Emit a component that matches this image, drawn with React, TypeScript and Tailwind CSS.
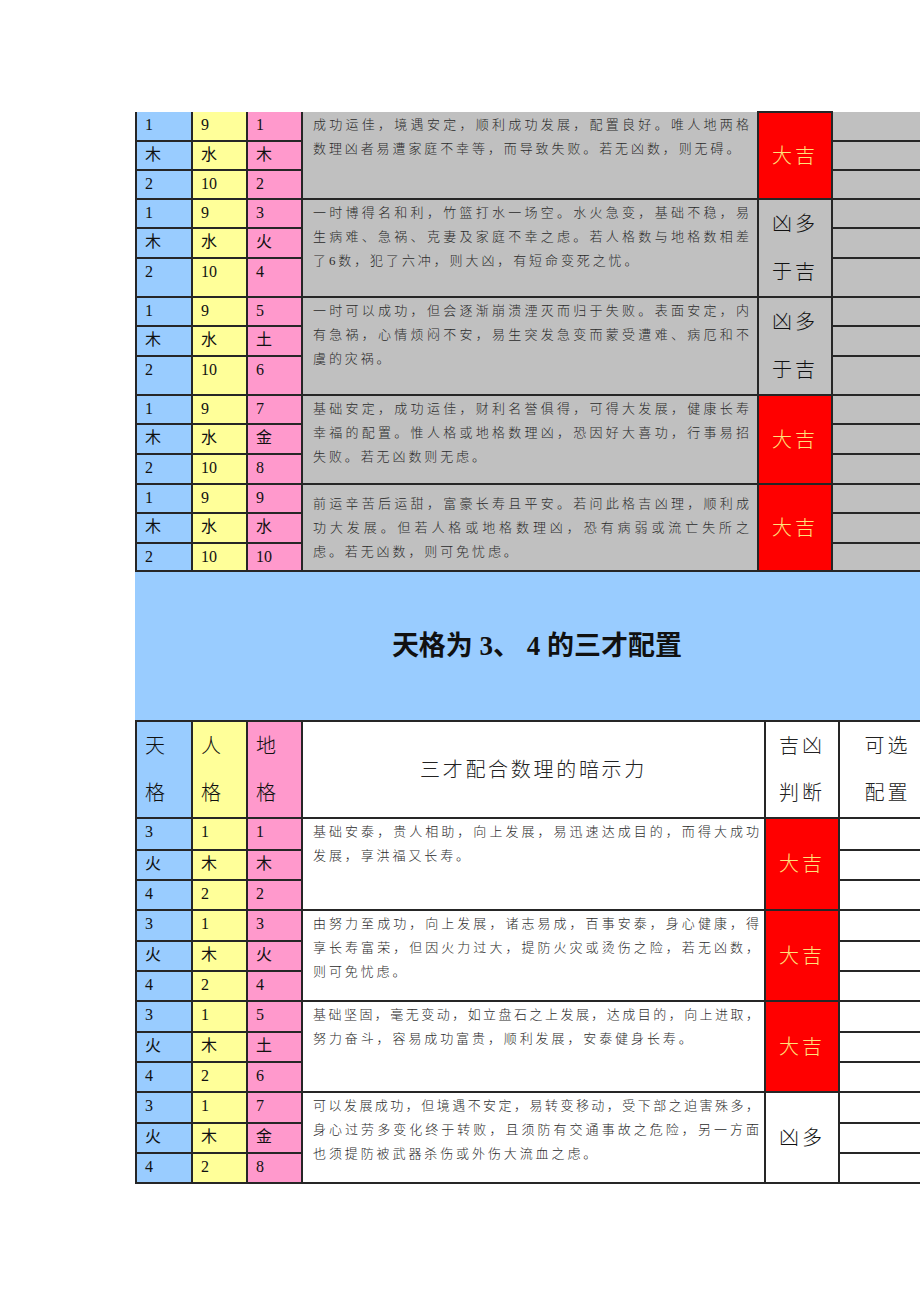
import React from 'react';

type Group = {
  tian: string[];
  ren: string[];
  di: string[];
  lines: string[];
  judge: 'good' | 'bad' | 'bad1';
  heights: number[];
  pt?: number;
};

const top: Group[] = [
  {
    tian: ['1', '木', '2'], ren: ['9', '水', '10'], di: ['1', '木', '2'],
    lines: ['成功运佳，境遇安定，顺利成功发展，配置良好。唯人地两格', '数理凶者易遭家庭不幸等，而导致失败。若无凶数，则无碍。'],
    judge: 'good', heights: [29, 29, 29],
  },
  {
    tian: ['1', '木', '2'], ren: ['9', '水', '10'], di: ['3', '火', '4'],
    lines: ['一时博得名和利，竹篮打水一场空。水火急变，基础不稳，易', '生病难、急祸、克妻及家庭不幸之虑。若人格数与地格数相差', '了6数，犯了六冲，则大凶，有短命变死之忧。'],
    judge: 'bad', heights: [29, 30, 39],
  },
  {
    tian: ['1', '木', '2'], ren: ['9', '水', '10'], di: ['5', '土', '6'],
    lines: ['一时可以成功，但会逐渐崩溃湮灭而归于失败。表面安定，内', '有急祸，心情烦闷不安，易生突发急变而蒙受遭难、病厄和不', '虞的灾祸。'],
    judge: 'bad', heights: [29, 30, 39],
  },
  {
    tian: ['1', '木', '2'], ren: ['9', '水', '10'], di: ['7', '金', '8'],
    lines: ['基础安定，成功运佳，财利名誉俱得，可得大发展，健康长寿', '幸福的配置。惟人格或地格数理凶，恐因好大喜功，行事易招', '失败。若无凶数则无虑。'],
    judge: 'good', heights: [29, 30, 30],
  },
  {
    tian: ['1', '木', '2'], ren: ['9', '水', '10'], di: ['9', '水', '10'],
    lines: ['前运辛苦后运甜，富豪长寿且平安。若问此格吉凶理，顺利成', '功大发展。但若人格或地格数理凶，恐有病弱或流亡失所之', '虑。若无凶数，则可免忧虑。'],
    judge: 'good', heights: [29, 30, 28], pt: 7,
  },
];

const bottom: Group[] = [
  {
    tian: ['3', '火', '4'], ren: ['1', '木', '2'], di: ['1', '木', '2'],
    lines: ['基础安泰，贵人相助，向上发展，易迅速达成目的，而得大成功', '发展，享洪福又长寿。'],
    judge: 'good', heights: [32, 30, 30],
  },
  {
    tian: ['3', '火', '4'], ren: ['1', '木', '2'], di: ['3', '火', '4'],
    lines: ['由努力至成功，向上发展，诸志易成，百事安泰，身心健康，得', '享长寿富荣，但因火力过大，提防火灾或烫伤之险，若无凶数，', '则可免忧虑。'],
    judge: 'good', heights: [31, 30, 30],
  },
  {
    tian: ['3', '火', '4'], ren: ['1', '木', '2'], di: ['5', '土', '6'],
    lines: ['基础坚固，毫无变动，如立盘石之上发展，达成目的，向上进取，', '努力奋斗，容易成功富贵，顺利发展，安泰健身长寿。'],
    judge: 'good', heights: [31, 30, 30],
  },
  {
    tian: ['3', '火', '4'], ren: ['1', '木', '2'], di: ['7', '金', '8'],
    lines: ['可以发展成功，但境遇不安定，易转变移动，受下部之迫害殊多，', '身心过劳多变化终于转败，且须防有交通事故之危险，另一方面', '也须提防被武器杀伤或外伤大流血之虑。'],
    judge: 'bad1', heights: [31, 30, 30],
  },
];

const cell = 'border-2 border-[#262626] p-0 align-top';
const small = 'pl-2 pt-[1px] text-[16px] leading-[24px] text-[#111]';

function Judge({ kind, bg }: { kind: Group['judge']; bg: string }) {
  if (kind === 'good') {
    return (
      <td rowSpan={3} className={`${cell} !align-middle bg-[#ff0000] text-center text-[20px] leading-[28px] tracking-[3px] text-[#ffe27a] font-light`}>
        大吉
      </td>
    );
  }
  return (
    <td rowSpan={3} className={`${cell} !align-middle ${bg} text-center text-[20px] leading-[48px] tracking-[3px] text-[#111] font-light`}>
      {kind === 'bad' ? (
        <>
          凶多
          <br />
          于吉
        </>
      ) : (
        '凶多'
      )}
    </td>
  );
}

function Rows({ g, bg, textW, first }: { g: Group; bg: string; textW: number; first?: boolean }) {
  return (
    <>
      {[0, 1, 2].map(i => {
        const noTop = first && i === 0 ? ' border-t-0' : '';
        return (
          <tr key={i} style={{ height: g.heights[i] }}>
            <td className={`${cell}${noTop} ${small} bg-[#99ccff]`}>{g.tian[i]}</td>
            <td className={`${cell}${noTop} ${small} bg-[#ffff99]`}>{g.ren[i]}</td>
            <td className={`${cell}${noTop} ${small} bg-[#ff99cc]`}>{g.di[i]}</td>
            {i === 0 && (
              <>
                <td rowSpan={3} className={`${cell}${noTop} ${bg} pl-[10px] text-[#2b2b2b] font-light`}>
                  <div className="text-[13px] leading-[24px] whitespace-nowrap" style={{ width: textW, paddingTop: g.pt ?? 1 }}>
                    {g.lines.map((l, k) => (
                      <div
                        key={k}
                        className={k < g.lines.length - 1 ? '[text-align-last:justify] text-justify' : 'tracking-[2.9px]'}
                      >
                        {l}
                      </div>
                    ))}
                  </div>
                </td>
                <Judge kind={g.judge} bg={bg} />
              </>
            )}
            <td className={`${cell}${noTop} ${bg}`} />
          </tr>
        );
      })}
    </>
  );
}

export default function App() {
  return (
    <div className="w-[920px] h-[1302px] overflow-hidden bg-white pt-[111px] pl-[135px] font-['Liberation_Serif','Noto_Sans_CJK_SC',serif]">
      <div className="w-[800px]">
        {/* upper table, continued from previous page */}
        <table className="w-[800px] table-fixed border-collapse">
          <colgroup>
            <col className="w-[56px]" />
            <col className="w-[55px]" />
            <col className="w-[55px]" />
            <col className="w-[456px]" />
            <col className="w-[74px]" />
            <col className="w-[104px]" />
          </colgroup>
          <tbody>
            {top.map((g, i) => (
              <Rows key={i} g={g} bg="bg-[#c0c0c0]" textW={436} first={i === 0} />
            ))}
          </tbody>
        </table>

        {/* section title */}
        <div className="h-[148px] bg-[#99ccff] flex items-center justify-center">
          <h2 className="text-[27px] font-bold text-[#111] pl-[4px]">天格为 3、 4 的三才配置</h2>
        </div>

        <table className="w-[800px] table-fixed border-collapse">
          <colgroup>
            <col className="w-[56px]" />
            <col className="w-[55px]" />
            <col className="w-[55px]" />
            <col className="w-[463px]" />
            <col className="w-[74px]" />
            <col className="w-[97px]" />
          </colgroup>
          <tbody>
            <tr style={{ height: 97 }}>
              <td className={`${cell} !align-middle bg-[#99ccff] pl-2 text-[20px] leading-[47px] font-light text-[#111]`}>天<br />格</td>
              <td className={`${cell} !align-middle bg-[#ffff99] pl-2 text-[20px] leading-[47px] font-light text-[#111]`}>人<br />格</td>
              <td className={`${cell} !align-middle bg-[#ff99cc] pl-2 text-[20px] leading-[47px] font-light text-[#111]`}>地<br />格</td>
              <td className={`${cell} !align-middle bg-white text-center text-[20px] tracking-[2.7px] font-light text-[#222]`}>三才配合数理的暗示力</td>
              <td className={`${cell} !align-middle bg-white text-center text-[20px] leading-[47px] tracking-[3px] font-light text-[#222]`}>吉凶<br />判断</td>
              <td className={`${cell} !align-middle bg-white text-center text-[20px] leading-[47px] tracking-[3px] font-light text-[#222]`}>可选<br />配置</td>
            </tr>
            {bottom.map((g, i) => (
              <Rows key={i} g={g} bg="bg-white" textW={446} />
            ))}
          </tbody>
        </table>
      </div>
    </div>
  );
}
